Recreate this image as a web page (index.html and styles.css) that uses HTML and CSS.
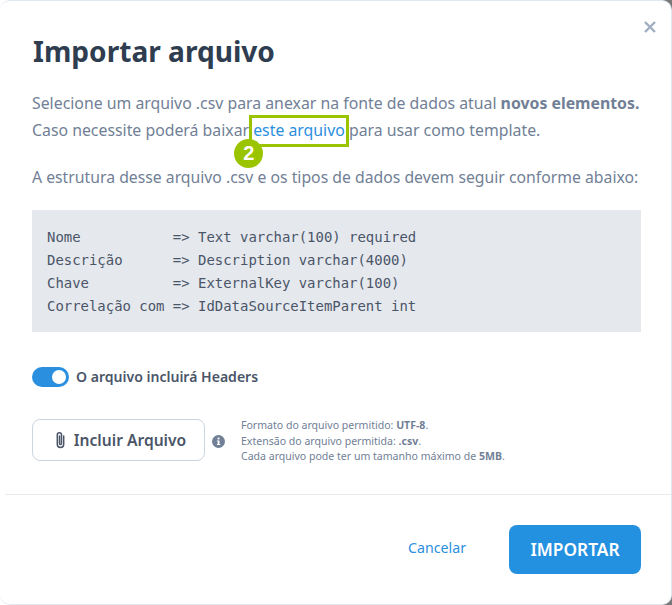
FILE: index.html
```html
<!DOCTYPE html>
<html lang="pt">
<head>
<meta charset="utf-8">
<title>Importar arquivo</title>
<link rel="stylesheet" href="styles.css">
</head>
<body>
<div class="modal">
  <button class="close" aria-label="Fechar">
    <svg width="12" height="12" viewBox="0 0 12 12"><path d="M1 1l10 10M11 1L1 11" stroke="#a0aec0" stroke-width="2.4" fill="none"/></svg>
  </button>
  <div class="body">
    <h1 class="title">Importar arquivo</h1>
    <p class="intro">Selecione um arquivo .csv para anexar na fonte de dados atual <strong>novos elementos.</strong><br>Caso necessite poderá baixar <span class="hl"><a class="link" href="#">este arquivo</a><span class="badge">2</span></span> para usar como template.</p>
    <p class="struct">A estrutura desse arquivo .csv e os tipos de dados devem seguir conforme abaixo:</p>
    <pre class="code">Nome           =&gt; Text varchar(100) required
Descrição      =&gt; Description varchar(4000)
Chave          =&gt; ExternalKey varchar(100)
Correlação com =&gt; IdDataSourceItemParent int</pre>
    <div class="toggle-row">
      <span class="toggle"><span class="knob"></span></span>
      <span class="toggle-label">O arquivo incluirá Headers</span>
    </div>
    <div class="file-row">
      <button class="file-btn">
        <svg width="11" height="18" viewBox="0 0 11 18"><path d="M8.7 5v8.2a3.2 3.2 0 0 1-6.4 0V3.9a2.1 2.1 0 0 1 4.2 0v8.6a1 1 0 0 1-2 0V5" stroke="#4a5568" stroke-width="1.5" fill="none" stroke-linecap="round"/></svg>
        Incluir Arquivo
      </button>
      <svg class="info" width="13" height="13" viewBox="0 0 13 13"><circle cx="6.5" cy="6.5" r="6.5" fill="#718096"/><rect x="5.6" y="2.6" width="1.9" height="1.8" fill="#fff"/><path d="M4.9 5.5h2.6v3.6h.8v1H4.9v-1h.8V6.5h-.8z" fill="#fff"/></svg>
      <div class="hints">
        <div>Formato do arquivo permitido: <strong>UTF-8</strong>.</div>
        <div>Extensão do arquivo permitida: <strong>.csv</strong>.</div>
        <div>Cada arquivo pode ter um tamanho máximo de <strong>5MB</strong>.</div>
      </div>
    </div>
  </div>
  <div class="footer">
    <a class="cancel" href="#">Cancelar</a>
    <button class="submit">IMPORTAR</button>
  </div>
</div>
</body>
</html>
```
FILE: styles.css
```css
* { box-sizing: border-box; }
html, body { margin: 0; padding: 0; }
body {
  width: 672px;
  height: 605px;
  overflow: hidden;
  background: linear-gradient(to right, #fff 0 660px, #777 660px);
  font-family: "Noto Sans", "Lato", sans-serif;
  color: #718096;
}
.modal {
  position: relative;
  width: 672px;
  height: 605px;
  background: #fff;
  border: solid #e2e8f0;
  border-width: 1px 1px 1px 0;
  border-radius: 10px;
}
.close {
  position: absolute;
  top: 20px;
  right: 15px;
  padding: 0;
  border: 0;
  background: none;
  line-height: 0;
}
.body {
  height: 494px;
  margin-left: 5px;
  padding: 0 30px 0 27px;
  border-bottom: 1px solid #e8eaf0;
}
.title {
  margin: 0;
  padding: 31px 0 0 1px;
  font-size: 28.1px;
  line-height: 38px;
  font-weight: 700;
  color: #2f3d50;
}
.intro {
  margin: 20px 0 0;
  font-size: 15.84px;
  line-height: 27px;
  white-space: nowrap;
}
.intro strong { color: #718096; font-weight: 700; }
.hl { position: relative; }
.hl::before {
  content: "";
  position: absolute;
  left: -4px; right: -4px; top: -4px; bottom: -6px;
  border: 3px solid #9bc400;
}
.link { color: #2b8fe0; text-decoration: none; }
.badge {
  position: absolute;
  left: -19px;
  top: 20px;
  width: 29px;
  height: 29px;
  border-radius: 50%;
  background: #9bc400;
  color: #fff;
  font-weight: 700;
  font-size: 20px;
  line-height: 29px;
  text-align: center;
  font-family: "Liberation Sans", sans-serif;
}
.struct { margin: 20px 0 0; font-size: 15.78px; line-height: 27px; white-space: nowrap; }
.code {
  margin: 19px 0 0;
  padding: 16px 15px 0;
  height: 122px;
  background: #e5e8ed;
  font-family: "DejaVu Sans Mono", monospace;
  font-size: 13.95px;
  line-height: 23px;
  color: #4a5568;
}
.toggle-row { display: flex; align-items: center; gap: 7px; margin-top: 35px; }
.toggle { display: flex; justify-content: flex-end; align-items: center; width: 37px; height: 20px; padding: 2px 3px; border-radius: 10px; background: #2b8fe0; }
.knob { width: 14px; height: 14px; border-radius: 50%; background: #fff; }
.toggle-label { font-size: 14.05px; font-weight: 600; color: #4a5568; line-height: 20px; }
.file-row { display: flex; align-items: center; margin-top: 31px; }
.file-btn {
  display: flex; align-items: center; justify-content: center; gap: 8px;
  width: 173px; height: 42px;
  margin: -1px 0 1px;
  border: 1px solid #cbd5e0; border-radius: 8px;
  background: #fff;
  font-family: inherit; font-size: 15.6px; font-weight: 600; color: #4a5568;
  padding: 0 0 0 4px;
}
.info { margin: 0 16px 0 7px; }
.hints { font-size: 10.56px; line-height: 15.5px; color: #718096; }
.footer { display: flex; justify-content: flex-end; align-items: center; gap: 43px; height: 108px; padding: 0 30px 0 0; }
.cancel { color: #2b8fe0; font-size: 14.2px; text-decoration: none; margin-bottom: 3px; }
.submit {
  width: 132px; height: 49px;
  border: 0; border-radius: 8px;
  background: #2490e0; color: #fff;
  font-family: inherit; font-size: 17.3px; font-weight: 600;
}
```
